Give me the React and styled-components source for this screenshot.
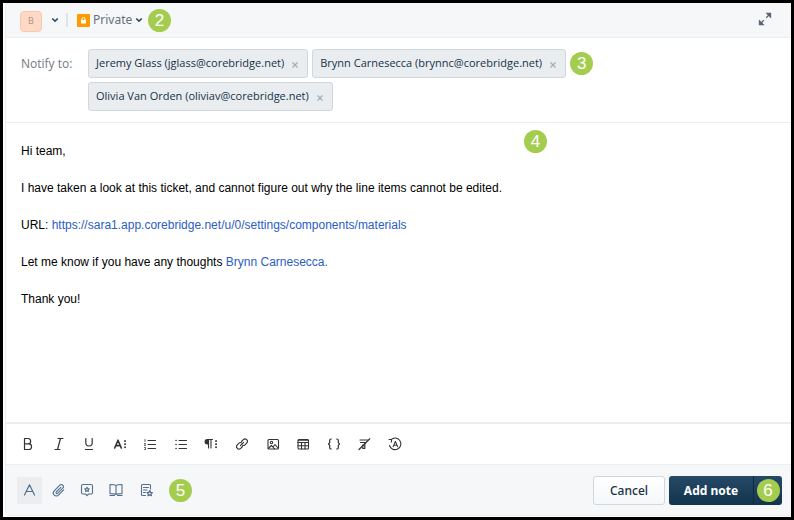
import React from 'react'
import styled, { createGlobalStyle } from 'styled-components'

const GlobalStyle = createGlobalStyle`
  * {
    box-sizing: border-box;
  }
  body {
    margin: 0;
    font-family: 'Noto Sans', 'Open Sans', sans-serif;
    color: #183247;
  }
  button, select {
    font-family: inherit;
    color: inherit;
    margin: 0;
    padding: 0;
    border: 0;
    background: none;
    cursor: pointer;
  }
  svg {
    display: block;
    flex: none;
  }
`;

const Frame = styled.main`
  min-height: 100vh;
  display: flex;
  flex-direction: column;
  border: 3px solid #000;
  padding: 0 0 1px 2px;
  background: #fff;
`;

const Panel = styled.form`
  flex: 1;
  display: flex;
  flex-direction: column;
  border-left: 1px solid #ebeef0;
  border-bottom: 1px solid #ebeef0;
  border-bottom-left-radius: 4px;
`;

const Header = styled.header`
  display: flex;
  align-items: center;
  height: 35px;
  padding: 0 19px 0 14px;
  background: #f5f7f9;
  border-bottom: 1px solid #ebeef0;
`;

const AvatarButton = styled.button`
  display: flex;
  align-items: center;
  gap: 9px;
`;

const Avatar = styled.span`
  display: grid;
  place-items: center;
  width: 22px;
  height: 21px;
  margin-top: 2px;
  border: 1px solid #f8c8ae;
  border-radius: 4px;
  background: #ffd9c6;
  color: #b7917d;
  font-size: 9px;
  line-height: 12px;
`;

const Divider = styled.span`
  width: 2px;
  height: 14px;
  margin: 0 9px 0 7px;
  background: #dfe4e9;
`;

const Visibility = styled.label`
  display: flex;
  align-items: center;
  gap: 2px;
`;

const LockBox = styled.span`
  display: grid;
  place-items: center;
  width: 13px;
  height: 13px;
  margin: 1px 1px 0 0;
  border-radius: 1px;
  background: #ff9a00;
`;

const VisibilitySelect = styled.select`
  appearance: none;
  outline: none;
  font-size: 12px;
  line-height: 16px;
  color: #64717d;
`;

const Badge = styled.span`
  display: grid;
  place-items: center;
  flex: none;
  width: 23px;
  height: 23px;
  border-radius: 50%;
  background: #a4cd50;
  color: #fff;
  font-family: 'Liberation Sans', Arial, sans-serif;
  font-size: 17px;
  font-weight: 400;
  line-height: 23px;
`;

const HeaderBadge = styled(Badge)`
  margin-left: 5px;
`;

const ExpandButton = styled.button`
  margin-left: auto;
`;

const Notify = styled.section`
  display: flex;
  align-items: flex-start;
  padding: 11px 15px;
  border-bottom: 1px solid #ebeef0;
`;

const NotifyLabel = styled.span`
  flex: none;
  width: 67px;
  font-family: 'Open Sans', sans-serif;
  font-size: 12px;
  line-height: 30px;
  color: #6f7c87;
`;

const TagList = styled.ul`
  display: flex;
  flex-wrap: wrap;
  align-items: center;
  gap: 4px;
  max-width: 520px;
  margin: 0;
  padding: 0;
  list-style: none;
`;

const Tag = styled.li`
  display: flex;
  align-items: center;
  gap: 6px;
  height: 29px;
  padding: 0 7px 2px;
  border: 1px solid #cfd7df;
  border-radius: 3px;
  background: #e9edf0;
  font-family: 'Open Sans', sans-serif;
  font-size: 11px;
  line-height: 16px;
  white-space: nowrap;
`;

const RemoveButton = styled.button`
  display: grid;
  place-items: center;
  width: 10px;
  height: 10px;
  margin-top: 4px;
`;

const Editor = styled.section`
  position: relative;
  flex: 1;
  padding: 18px 15px;
  font-family: 'Liberation Sans', Arial, sans-serif;
  font-size: 12px;
  line-height: 20px;
  color: #000;
`;

const Message = styled.div`
  outline: none;

  p {
    margin: 0 0 17px;
  }
  a {
    color: #2c5cc5;
    text-decoration: none;
  }
`;

const EditorBadge = styled(Badge)`
  position: absolute;
  top: 7px;
  left: 518px;
`;

const FormatBar = styled.div`
  padding: 0 10px;
  border-top: 2px solid #ebeef0;
  border-bottom: 1px solid #ebeef0;
`;

const FormatTools = styled.div`
  display: flex;
  align-items: center;
  justify-content: space-between;
  max-width: 391px;
  height: 40px;
`;

const ToolButton = styled.button`
  display: grid;
  place-items: center;
  width: 24px;
  height: 24px;
  color: #333;
`;

const Footer = styled.footer`
  display: flex;
  align-items: center;
  gap: 4px;
  height: 50px;
  padding: 0 9px 0 11px;
  background: #f5f7f9;
`;

const ActionButton = styled.button`
  display: grid;
  place-items: center;
  width: 25px;
  height: 27px;
  border-radius: 2px;
  color: #54708c;
  background: ${props => props.$active ? '#ebedf1' : 'none'};
`;

const FooterBadge = styled(Badge)`
  margin-left: 7px;
`;

const CancelButton = styled.button`
  width: 72px;
  height: 29px;
  margin-left: auto;
  border: 1px solid #cfd7df;
  border-radius: 3px;
  background: linear-gradient(#fff, #f5f7f9);
  font-size: 12px;
  font-weight: 500;
`;

const SplitButton = styled.div`
  display: flex;
  border-radius: 3px;
  overflow: hidden;
  background: linear-gradient(#264966, #12344d);
`;

const SubmitButton = styled.button`
  width: 84px;
  height: 29px;
  font-size: 12px;
  font-weight: 700;
  color: #fff;
`;

const MoreButton = styled.button`
  display: grid;
  place-items: center;
  width: 29px;
  border-left: 1px solid #0d2b42;
`;

function Chevron() {
  return (
    <svg width="8" height="6" viewBox="0 0 8 6" fill="none" stroke="#2b4a63" strokeWidth="1.6">
      <path d="M1.2 1.5 4 4.2 6.8 1.5" />
    </svg>
  )
}

function Icon({ children, size = 16, width = 1.1 }) {
  return (
    <svg width={size} height={size} viewBox="0 0 16 16" fill="none" stroke="currentColor"
      strokeWidth={width} strokeLinecap="round" strokeLinejoin="round">
      {children}
    </svg>
  )
}

const moreDots = (
  <g fill="currentColor" stroke="none">
    <rect x="12.2" y="4.2" width="1.7" height="1.7" />
    <rect x="12.2" y="7.3" width="1.7" height="1.7" />
    <rect x="12.2" y="10.4" width="1.7" height="1.7" />
  </g>
)

const formatTools = [
  {
    label: 'Bold',
    icon: <Icon width={1.2}><path d="M4.5 2.5h3.5a2.6 2.6 0 0 1 0 5.3H4.5zM4.5 7.8h4.2a2.8 2.8 0 0 1 0 5.7H4.5z" /></Icon>
  },
  { label: 'Italic', icon: <Icon width={1.2}><path d="M7 2.5h5M4 13.5h5M9.5 2.5l-3 11" /></Icon> },
  {
    label: 'Underline',
    icon: <Icon width={1.2}><path d="M4.8 2.5v4.3a3.2 3.2 0 0 0 6.4 0V2.5M4.5 13.5h7" /></Icon>
  },
  {
    label: 'More text',
    icon: <Icon width={1.6}><path d="M2.7 12 6 4.2 9.3 12M4 9.6h4" />{moreDots}</Icon>
  },
  {
    label: 'Ordered list',
    icon: (
      <Icon>
        <path d="M6 4.5h7.5M6 8.5h7.5M6 12.5h7.5" />
        <path strokeWidth="0.8" d="M3 3.5v2M2.5 7.5h1l-1 2h1M2.5 11.5h1v2h-1" />
      </Icon>
    )
  },
  {
    label: 'Bullet list',
    icon: (
      <Icon>
        <path d="M6 4.5h7.5M6 8.5h7.5M6 12.5h7.5" />
        <path strokeWidth="1.5" d="M3 4.5h.1M3 8.5h.1M3 12.5h.1" />
      </Icon>
    )
  },
  {
    label: 'More paragraph',
    icon: (
      <Icon>
        <path fill="currentColor" d="M5.5 3.5H4.3a2.2 2.2 0 0 0 0 4.4h1.2z" />
        <path d="M5.5 3.5v8.5M8 3.5v8.5M5.5 3.5h4" />
        {moreDots}
      </Icon>
    )
  },
  {
    label: 'Insert link',
    icon: (
      <Icon>
        <path d="M7.5 5.5 9.3 3.7a2.4 2.4 0 0 1 3.4 3.4L11 8.8a2.2 2.2 0 0 1-2.4.5M8.5 10.5l-1.8 1.8a2.4 2.4 0 0 1-3.4-3.4L5 7.2a2.2 2.2 0 0 1 2.4-.5M6.4 9.6l3.2-3.2" />
      </Icon>
    )
  },
  {
    label: 'Insert image',
    icon: (
      <Icon>
        <rect x="3" y="3.5" width="10.5" height="9.5" rx="1" />
        <circle cx="6.5" cy="6.5" r="1.2" />
        <path d="m3.3 12.5 3-3 1.7 1.5 2-2.5 3 3.5M8 11l1.5 1.8" />
      </Icon>
    )
  },
  {
    label: 'Insert table',
    icon: (
      <Icon>
        <rect x="3" y="3.5" width="10.5" height="9.5" rx="1" />
        <path d="M3 6.5h10.5M3 9.8h10.5M6.5 6.5V13M10 6.5V13M3.5 4.3h9.500" />
      </Icon>
    )
  },
  {
    label: 'Code snippet',
    icon: (
      <Icon width={1.2}>
        <path d="M5.3 3H5a1.3 1.3 0 0 0-1.3 1.3v2.4L2.5 8l1.2 1.3v2.4A1.3 1.3 0 0 0 5 13h.3M10.7 3h.3a1.3 1.3 0 0 1 1.3 1.3v2.4L13.5 8l-1.2 1.3v2.4A1.3 1.3 0 0 1 11 13h-.3" />
      </Icon>
    )
  },
  {
    label: 'Clear formatting',
    icon: (
      <Icon width={1.2}>
        <path d="M4 4h7.5M4.500 6.500h5M8.8 6.500v6M6.800 9v3.500h2" />
        <path d="M13.8 2.8 3 13.5" />
      </Icon>
    )
  },
  {
    label: 'Restore formatting',
    icon: (
      <Icon>
        <path d="M4 3.700A5.800 5.800 0 1 1 2.500 9.500M2 3.500h2.500V6" />
        <path d="M6.200 10.600 8.400 5.400l2.200 5.200M7 9.200h2.800" />
      </Icon>
    )
  }
]

const star = 'm0-2.2.7 1.4 1.5.2-1.1 1.1.3 1.5L0 1.3l-1.4.7.3-1.5-1.1-1.1 1.5-.2z'

const actions = [
  { label: 'Text formatting', active: true, icon: <Icon width={1.2}><path d="M2.5 13 7.500 2.800 12.500 13M4.300 9.500h6.400" /></Icon> },
  {
    label: 'Attach file',
    icon: (
      <Icon>
        <path d="m9.8 5.4-4.600 4.600a1 1 0 0 0 1.400 1.400l5.200-5.200a2.100 2.100 0 0 0-3-3L3.200 8.800a3 3 0 0 0 4.300 4.300l5.200-5.200" />
      </Icon>
    )
  },
  {
    label: 'Canned responses',
    icon: (
      <Icon>
        <path d="M3 2.500h8A1.500 1.500 0 0 1 12.500 4v6.500A1.500 1.500 0 0 1 11 12H8.500L7 13.600 5.500 12H3a1.500 1.500 0 0 1-1.500-1.500V4A1.500 1.500 0 0 1 3 2.500z" />
        <path transform="translate(7 7.4)" d={star} />
      </Icon>
    )
  },
  {
    label: 'Insert solution article',
    icon: (
      <Icon>
        <path d="M7 3.500C6 2.700 4.500 2.500 1 2.500v9c3.500 0 5 .2 6 1 1-.8 2.500-1 6-1v-9c-3.500 0-5 .2-6 1zM7 3.500v9M1 13.400h4.500M8.500 13.400H13" />
      </Icon>
    )
  },
  {
    label: 'Apply template',
    icon: (
      <Icon>
        <path d="M12.500 7V3.500a1 1 0 0 0-1-1h-7a1 1 0 0 0-1 1v9a1 1 0 0 0 1 1h3M5.500 5.500h5M5.500 8h3.500M5.500 10.500h2" />
        <path transform="translate(11.7 11.3) scale(1.2)" d={star} />
      </Icon>
    )
  }
]

const people = [
  'Jeremy Glass (jglass@corebridge.net)',
  'Brynn Carnesecca (brynnc@corebridge.net)',
  'Olivia Van Orden (oliviav@corebridge.net)'
]

function Person({ name }) {
  return (
    <Tag>
      <span>{name}</span>
      <RemoveButton type="button" aria-label={`Remove ${name}`}>
        <svg width="6" height="6" viewBox="0 0 6 6" stroke="#a3afb9" strokeWidth="1.4">
          <path d="m.5.5 5 5M5.5.5l-5 5" />
        </svg>
      </RemoveButton>
    </Tag>
  )
}

export default function App() {
  return (
    <Frame>
      <GlobalStyle />
      <Panel onSubmit={e => e.preventDefault()}>
        <Header>
          <AvatarButton type="button" aria-label="Change agent">
            <Avatar>B</Avatar>
            <Chevron />
          </AvatarButton>
          <Divider />
          <Visibility>
            <LockBox>
              <svg width="7" height="7" viewBox="0 0 7 7">
                <path d="M2 3V2a1.5 1.5 0 0 1 3 0v1" fill="none" stroke="#fff" />
                <rect x="1" y="3" width="5" height="3.5" fill="#fff" />
              </svg>
            </LockBox>
            <VisibilitySelect aria-label="Note visibility" defaultValue="Private">
              <option>Private</option>
              <option>Public</option>
            </VisibilitySelect>
            <Chevron />
          </Visibility>
          <HeaderBadge>2</HeaderBadge>
          <ExpandButton type="button" aria-label="Expand">
            <svg width="14" height="16" viewBox="0 0 14 16" fill="#566573" stroke="#566573" strokeWidth="1.3">
              <path d="M9 1.5h3.5V5zM1.500 9v3.500H5z" />
              <path d="M11.500 2.500 8.200 5.800M2.500 11.500l3.300-3.300" />
            </svg>
          </ExpandButton>
        </Header>

        <Notify>
          <NotifyLabel id="notify-label">Notify to:</NotifyLabel>
          <TagList aria-labelledby="notify-label">
            <Person name={people[0]} />
            <Person name={people[1]} />
            <li><Badge>3</Badge></li>
            <Person name={people[2]} />
          </TagList>
        </Notify>

        <Editor>
          <Message role="textbox" aria-label="Note" aria-multiline="true" contentEditable suppressContentEditableWarning spellCheck={false}>
            <p>Hi team,</p>
            <p>I have taken a look at this ticket, and cannot figure out why the line items cannot be edited.</p>
            <p>URL: <a href="https://sara1.app.corebridge.net/u/0/settings/components/materials">https://sara1.app.corebridge.net/u/0/settings/components/materials</a></p>
            <p>Let me know if you have any thoughts <a href="#brynn">Brynn Carnesecca.</a></p>
            <p>Thank you!</p>
          </Message>
          <EditorBadge>4</EditorBadge>
        </Editor>

        <FormatBar>
          <FormatTools role="toolbar" aria-label="Formatting">
            {formatTools.map(tool => (
              <ToolButton key={tool.label} type="button" aria-label={tool.label}>{tool.icon}</ToolButton>
            ))}
          </FormatTools>
        </FormatBar>

        <Footer>
          {actions.map(action => (
            <ActionButton key={action.label} type="button" aria-label={action.label} $active={action.active}>
              {action.icon}
            </ActionButton>
          ))}
          <FooterBadge>5</FooterBadge>
          <CancelButton type="button">Cancel</CancelButton>
          <SplitButton>
            <SubmitButton type="submit">Add note</SubmitButton>
            <MoreButton type="button" aria-label="More options"><Badge>6</Badge></MoreButton>
          </SplitButton>
        </Footer>
      </Panel>
    </Frame>
  )
}
